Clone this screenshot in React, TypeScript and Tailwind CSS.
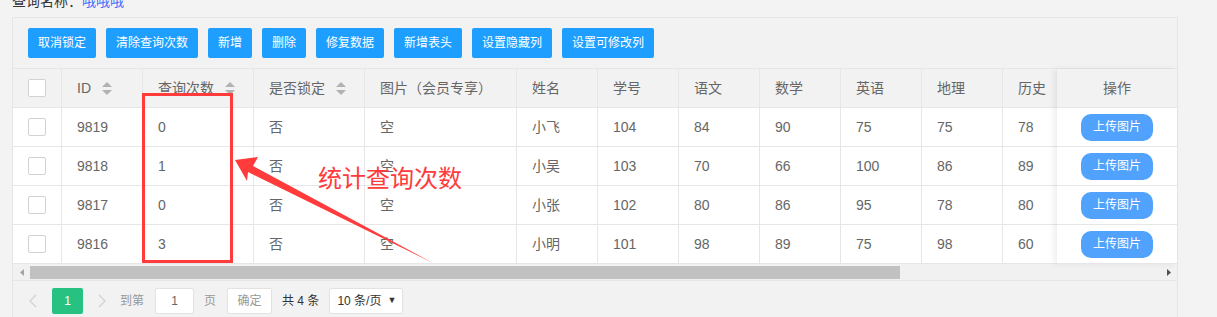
import React from "react";

type Row = {
  id: number;
  q: number;
  lock: string;
  pic: string;
  name: string;
  no: number;
  yw: number;
  sx: number;
  yy: number;
  dl: number;
  ls: number;
};

const rows: Row[] = [
  { id: 9819, q: 0, lock: "否", pic: "空", name: "小飞", no: 104, yw: 84, sx: 90, yy: 75, dl: 75, ls: 78 },
  { id: 9818, q: 1, lock: "否", pic: "空", name: "小吴", no: 103, yw: 70, sx: 66, yy: 100, dl: 86, ls: 89 },
  { id: 9817, q: 0, lock: "否", pic: "空", name: "小张", no: 102, yw: 80, sx: 86, yy: 95, dl: 78, ls: 80 },
  { id: 9816, q: 3, lock: "否", pic: "空", name: "小明", no: 101, yw: 98, sx: 89, yy: 75, dl: 98, ls: 60 },
];

const cols: { key: keyof Row; title: string; w: string; sort?: boolean }[] = [
  { key: "id", title: "ID", w: "w-[81px]", sort: true },
  { key: "q", title: "查询次数", w: "w-[111px]", sort: true },
  { key: "lock", title: "是否锁定", w: "w-[111px]", sort: true },
  { key: "pic", title: "图片（会员专享）", w: "w-[152px]" },
  { key: "name", title: "姓名", w: "w-[81px]" },
  { key: "no", title: "学号", w: "w-[81px]" },
  { key: "yw", title: "语文", w: "w-[81px]" },
  { key: "sx", title: "数学", w: "w-[81px]" },
  { key: "yy", title: "英语", w: "w-[81px]" },
  { key: "dl", title: "地理", w: "w-[81px]" },
  { key: "ls", title: "历史", w: "w-[81px]" },
];

const tools = ["取消锁定", "清除查询次数", "新增", "删除", "修复数据", "新增表头", "设置隐藏列", "设置可修改列"];

function SortIcon() {
  return (
    <svg width="10" height="13" viewBox="0 0 10 13" className="ml-[11px] shrink-0">
      <path d="M0 5 L5 0 L10 5 Z" fill="#b2b2b2" />
      <path d="M0 8 L5 13 L10 8 Z" fill="#b2b2b2" />
    </svg>
  );
}

function Checkbox() {
  return <div className="h-[18px] w-[18px] rounded-[2px] border border-[#d2d2d2] bg-white" />;
}

function Chevron({ dir }: { dir: "left" | "right" }) {
  return (
    <svg width="8" height="14" viewBox="0 0 8 14">
      <path
        d={dir === "left" ? "M7 1 L1 7 L7 13" : "M1 1 L7 7 L1 13"}
        fill="none"
        stroke="#d2d2d2"
        strokeWidth="1.3"
      />
    </svg>
  );
}

export default function App() {
  return (
    <div className="relative h-[317px] w-[1217px] overflow-hidden bg-[#f3f3f3] font-['Liberation_Sans','Noto_Sans_CJK_SC',sans-serif] text-[14px] text-[#666]">
      <div className="h-[17px] pl-3">
        <div className="relative top-[-9px] leading-[20px] text-[#333]">
          查询名称：<span className="text-[#3d6bff]">哦哦哦</span>
        </div>
      </div>

      <div className="ml-3 w-[1166px] border border-b-0 border-[#e6e6e6] bg-[#f2f2f2]">
        <div className="flex gap-[10px] px-[15px] py-[10px]">
          {tools.map((t) => (
            <button
              key={t}
              type="button"
              className="h-[30px] rounded-[2px] bg-[#1e9fff] px-[10px] text-[12px] text-white"
            >
              {t}
            </button>
          ))}
        </div>

        <div className="flex border-t border-[#e6e6e6]">
          <div className="min-w-0 flex-1 overflow-hidden">
            <div className="flex h-[39px] border-b border-[#e6e6e6] bg-[#f2f2f2]">
              <div className="flex w-[49px] shrink-0 items-center justify-center border-r border-[#e6e6e6]">
                <Checkbox />
              </div>
              {cols.map((c) => (
                <div
                  key={c.key}
                  className={`${c.w} flex shrink-0 items-center border-r border-[#e6e6e6] pl-[15px] whitespace-nowrap`}
                >
                  {c.title}
                  {c.sort ? <SortIcon /> : null}
                </div>
              ))}
            </div>
            {rows.map((r) => (
              <div key={r.id} className="flex h-[39px] border-b border-[#e6e6e6] bg-white">
                <div className="flex w-[49px] shrink-0 items-center justify-center border-r border-[#e6e6e6]">
                  <Checkbox />
                </div>
                {cols.map((c) => (
                  <div
                    key={c.key}
                    className={`${c.w} flex shrink-0 items-center border-r border-[#e6e6e6] pl-[15px]`}
                  >
                    {r[c.key]}
                  </div>
                ))}
              </div>
            ))}
          </div>

          <div className="relative z-10 w-[120px] shrink-0 shadow-[-3px_0_6px_rgba(0,0,0,0.07)]">
            <div className="flex h-[39px] items-center justify-center border-b border-[#e6e6e6] bg-[#f2f2f2]">
              操作
            </div>
            {rows.map((r) => (
              <div key={r.id} className="flex h-[39px] items-center justify-center border-b border-[#e6e6e6] bg-white">
                <button
                  type="button"
                  className="h-[27px] w-[72px] rounded-[10px] bg-[#50a2fc] text-[12px] text-white"
                >
                  上传图片
                </button>
              </div>
            ))}
          </div>
        </div>

        <div className="flex h-[17px] border-b border-[#e6e6e6] bg-[#f1f1f1]">
          <div className="flex w-[17px] shrink-0 items-center justify-center">
            <svg width="4" height="7" viewBox="0 0 4 7">
              <path d="M4 0 L0 3.5 L4 7 Z" fill="#a3a3a3" />
            </svg>
          </div>
          <div className="mt-[2px] h-[13px] w-[870px] bg-[#c1c1c1]" />
          <div className="flex-1" />
          <div className="flex w-[17px] shrink-0 items-center justify-center">
            <svg width="4" height="7" viewBox="0 0 4 7">
              <path d="M0 0 L4 3.5 L0 7 Z" fill="#505050" />
            </svg>
          </div>
        </div>

        <div className="flex h-[40px] items-start pt-[7px] text-[12px]">
          <div className="flex h-[26px] w-[39px] items-center justify-center">
            <Chevron dir="left" />
          </div>
          <div className="flex h-[26px] w-[31px] items-center justify-center rounded-[2px] bg-[#27c281] text-white">1</div>
          <div className="flex h-[26px] w-[37px] items-center justify-center">
            <Chevron dir="right" />
          </div>
          <div className="flex h-[26px] items-center text-[#999]">到第</div>
          <div className="ml-[11px] flex h-[26px] w-[39px] items-center justify-center rounded-[2px] border border-[#e2e2e2] bg-white text-[#666]">
            1
          </div>
          <div className="ml-[10px] flex h-[26px] items-center text-[#999]">页</div>
          <div className="ml-[11px] flex h-[26px] w-[45px] items-center justify-center rounded-[2px] border border-[#e2e2e2] bg-white text-[#999]">
            确定
          </div>
          <div className="ml-[10px] flex h-[26px] items-center text-[#333]">共 4 条</div>
          <div className="ml-[10px] flex h-[26px] w-[74px] items-center rounded-[2px] border border-[#e2e2e2] bg-white pl-[7px] text-[#333]">
            10 条/页
            <span className="ml-auto mr-[6px] text-[9px]">▼</span>
          </div>
        </div>
      </div>

      <div className="absolute left-[142px] top-[93px] h-[170px] w-[91px] border-[3px] border-[#ff3b3b]" />
      <svg className="absolute left-0 top-0" width="1217" height="317" viewBox="0 0 1217 317">
        <path d="M235 160 L258 157 L253 166 L433 263 L248 172 L247 181 Z" fill="#ff3b3b" />
      </svg>
      <div className="absolute left-[318px] top-[165px] font-['Noto_Sans_CJK_SC',sans-serif] text-[24px] leading-[24px] text-[#ff3b3b]">
        统计查询次数
      </div>
    </div>
  );
}
